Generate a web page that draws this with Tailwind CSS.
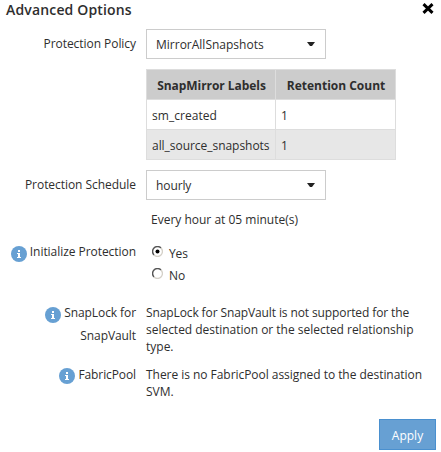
<!DOCTYPE html>
<html lang="en">
<head>
<meta charset="utf-8">
<title>Advanced Options</title>
<script src="https://cdn.jsdelivr.net/npm/@tailwindcss/browser@4"></script>
</head>
<body class="h-[452px] w-[441px] overflow-hidden bg-white font-['Open_Sans','Noto_Sans',sans-serif] text-[12px] leading-[17px] text-[#2e2e2e] whitespace-nowrap">
<header class="flex h-[29px] items-start justify-between pl-[6px] pr-[7px]">
  <h1 class="text-[14px] leading-[19px] font-semibold tracking-[0.16px]"><span>Advanced Options</span></h1>
  <svg class="mt-[3px] h-[11px] w-[12px]" viewBox="0 0 12 11"><path d="M1.5 1.2 10.5 9.8M10.5 1.2 1.5 9.8" stroke="#000" stroke-width="3"/></svg>
</header>
<main class="grid grid-cols-[136px_1fr] gap-x-[10px]">
  <div class="pt-[6px] text-right tracking-[-0.05px]"><span>Protection Policy</span></div>
  <div class="h-[141px]">
    <div class="flex h-[30px] w-[180px] items-center justify-between border border-[#ccc] pl-[9px] pr-[10px]">
      <span class="mt-[1px]">MirrorAllSnapshots</span>
      <svg class="h-[4px] w-[8px]" viewBox="0 0 8 4"><path d="M0 0H8L5 4H3Z" fill="#222"/></svg>
    </div>
    <table class="mt-[10px] w-[250px] table-fixed border-collapse border border-[#ddd]">
      <colgroup><col class="w-[129px]"><col class="w-[120px]"></colgroup>
      <thead><tr class="h-[30px] bg-[#ccc]"><th class="border border-[#ddd] p-0 pt-[1px] pl-[1px] font-bold tracking-[-0.05px]"><span>SnapMirror Labels</span></th><th class="border border-[#ddd] p-0 pt-[1px] pl-[1px] font-bold"><span>Retention Count</span></th></tr></thead>
      <tbody>
        <tr class="h-[30px]"><td class="border border-[#ddd] p-0 pt-[2px] pl-[5px] tracking-[0.04px]"><span>sm_created</span></td><td class="border border-[#ddd] p-0 pt-[2px] pl-[5px]">1</td></tr>
        <tr class="h-[30px] bg-[#e7e7e7]"><td class="border border-[#ddd] p-0 pt-[2px] pl-[5px] tracking-[-0.04px]"><span>all_source_snapshots</span></td><td class="border border-[#ddd] p-0 pt-[2px] pl-[5px]">1</td></tr>
      </tbody>
    </table>
  </div>
  <div class="pt-[6px] text-right tracking-[-0.05px]"><span>Protection Schedule</span></div>
  <div class="h-[73px]">
    <div class="flex h-[30px] w-[180px] items-center justify-between border border-[#ccc] pl-[9px] pr-[10px]">
      <span class="mt-[1px] tracking-[-0.1px]">hourly</span>
      <svg class="h-[4px] w-[8px]" viewBox="0 0 8 4"><path d="M0 0H8L5 4H3Z" fill="#222"/></svg>
    </div>
    <p class="pt-[11px] pl-[5px]"><span>Every hour at 05 minute(s)</span></p>
  </div>
  <div class="flex items-start justify-end gap-[3px]">
    <svg class="mt-[3px] size-[16px]" viewBox="0 0 16 16"><circle cx="8" cy="8" r="8" fill="#67a0d3"/><path d="M7 4h2v2H7zM6 7h3v4h1v1H6v-1h1V8H6z" fill="#fff"/></svg>
    <span class="tracking-[-0.05px]">Initialize Protection</span>
  </div>
  <div class="h-[61px] pl-[6px]">
    <div class="flex h-[22px] items-start gap-[6px]">
      <svg class="mt-[3px] size-[11px]" viewBox="0 0 11 11" fill="none"><path d="M2 9A4.8 4.8 0 0 1 9 2" stroke="#555" stroke-width="1.5"/><path d="M9 2A4.8 4.8 0 0 1 2 9" stroke="#d4d0c8" stroke-width="1.3"/><circle cx="5.5" cy="5.5" r="2" fill="#000"/></svg>
      <span class="pt-[2px] tracking-[-0.15px]">Yes</span>
    </div>
    <div class="flex h-[22px] items-start gap-[6px]">
      <svg class="mt-[3px] size-[11px]" viewBox="0 0 11 11" fill="none"><path d="M2 9A4.8 4.8 0 0 1 9 2" stroke="#555" stroke-width="1.5"/><path d="M9 2A4.8 4.8 0 0 1 2 9" stroke="#d4d0c8" stroke-width="1.3"/></svg>
      <span class="pt-[2px]">No</span>
    </div>
  </div>
  <div class="flex items-start justify-end gap-[3px]">
    <svg class="mt-[3px] size-[16px]" viewBox="0 0 16 16"><circle cx="8" cy="8" r="8" fill="#67a0d3"/><path d="M7 4h2v2H7zM6 7h3v4h1v1H6v-1h1V8H6z" fill="#fff"/></svg>
    <div class="-mt-[3px] text-right leading-[23px] tracking-[-0.08px]"><span>SnapLock for</span><br><span>SnapVault</span></div>
  </div>
  <p class="h-[62px]"><span class="tracking-[-0.11px]">SnapLock for SnapVault is not supported for the</span><br><span class="tracking-[-0.02px]">selected destination or the selected relationship</span><br><span>type.</span></p>
  <div class="flex items-start justify-end gap-[3px]">
    <svg class="mt-[2px] size-[16px]" viewBox="0 0 16 16"><circle cx="8" cy="8" r="8" fill="#67a0d3"/><path d="M7 4h2v2H7zM6 7h3v4h1v1H6v-1h1V8H6z" fill="#fff"/></svg>
    <span class="tracking-[-0.1px]">FabricPool</span>
  </div>
  <p class="h-[53px]"><span class="tracking-[-0.04px]">There is no FabricPool assigned to the destination</span><br><span>SVM.</span></p>
</main>
<footer class="flex justify-end pr-[5px]">
  <button class="h-[31px] w-[57px] border border-[#4a90cf] bg-[#67a0d3] pt-[2px] text-white"><span>Apply</span></button>
</footer>
</body>
</html>
